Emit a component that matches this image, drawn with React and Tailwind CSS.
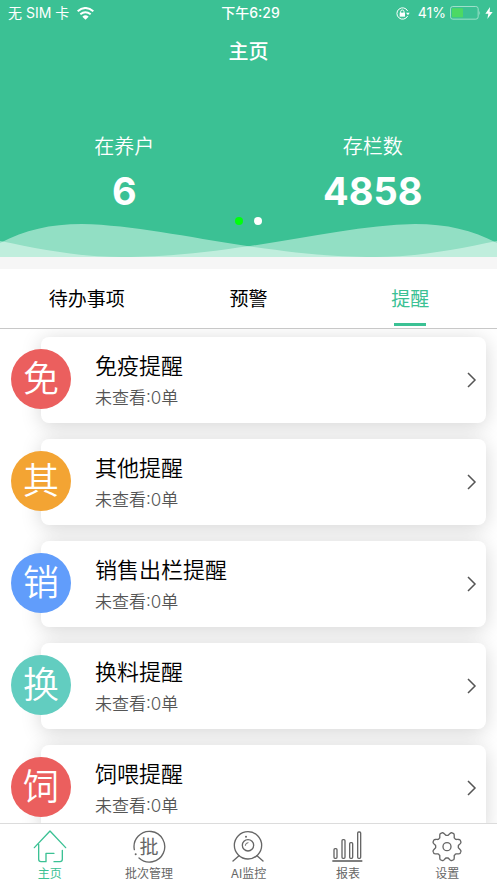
import React, { useState } from 'react';

const reminders = [
  { id: 1, mark: '免', title: '免疫提醒', count: 0, color: 'bg-[#eb5f5e]' },
  { id: 2, mark: '其', title: '其他提醒', count: 0, color: 'bg-[#f3a433]' },
  { id: 3, mark: '销', title: '销售出栏提醒', count: 0, color: 'bg-[#619dfb]' },
  { id: 4, mark: '换', title: '换料提醒', count: 0, color: 'bg-[#62cdc0]' },
  { id: 5, mark: '饲', title: '饲喂提醒', count: 0, color: 'bg-[#eb5f5e]' },
];

const tabs = ['待办事项', '预警', '提醒'];

const iconProps = {
  viewBox: '0 0 108 108',
  className: 'h-9 w-9',
  fill: 'none',
  stroke: 'currentColor',
  strokeWidth: 4,
  strokeLinecap: 'round',
  strokeLinejoin: 'round',
  'aria-hidden': true,
};

// Eight rounded teeth, with a valley pointing straight up
const gearPoints = Array.from({ length: 160 }, (_, i) => {
  const angle = (i / 160) * Math.PI * 2;
  const wave = Math.max(-1, Math.min(1, Math.cos(angle * 8) * 1.4));
  const r = 39 - wave * 5;
  return `${(54 + r * Math.sin(angle)).toFixed(1)},${(53 - r * Math.cos(angle)).toFixed(1)}`;
}).join(' ');

const HomeIcon = () => (
  <svg {...iconProps}>
    <path d="M7 56 54 6l47 50" />
    <path d="M20 46v45q0 7 7 7h15V73h24M91 64v27q0 7-7 7H66" />
  </svg>
);

const BatchIcon = () => (
  <span className="relative flex h-9 w-9 items-center justify-center">
    <svg {...iconProps}>
      <path d="M10 62A46 46 0 1 1 24 87" />
      <circle cx="14" cy="76" r="3" fill="currentColor" stroke="none" />
    </svg>
    <span className="absolute inset-0 flex items-center justify-center text-[19px] leading-none">批</span>
  </span>
);

const CameraIcon = () => (
  <svg {...iconProps}>
    <circle cx="54" cy="49" r="41" />
    <circle cx="54" cy="49" r="17" />
    <path d="M46 49a8 8 0 0 1 8-8" strokeWidth="3" />
    <circle cx="48" cy="23" r="3" fill="currentColor" stroke="none" />
    <path d="M27 80 9 96M81 80l18 16" />
  </svg>
);

const ReportIcon = () => (
  <svg {...iconProps}>
    <rect x="12" y="59" width="9" height="29" rx="3" />
    <rect x="36" y="32" width="9" height="56" rx="3" />
    <rect x="59" y="41" width="9" height="47" rx="3" />
    <rect x="83" y="9" width="9" height="79" rx="3" />
    <path d="M7 96h90" strokeWidth="5" strokeLinecap="butt" />
  </svg>
);

const SettingsIcon = () => (
  <svg {...iconProps}>
    <circle cx="54" cy="53" r="12" />
    <polygon points={gearPoints} />
  </svg>
);

const navItems = [
  { label: '主页', icon: HomeIcon },
  { label: '批次管理', icon: BatchIcon },
  { label: 'AI监控', icon: CameraIcon },
  { label: '报表', icon: ReportIcon },
  { label: '设置', icon: SettingsIcon },
];

const StatusBar = () => (
  <div className="grid h-[26px] grid-cols-3 items-center pr-1 pl-2 text-sm leading-6">
    <div className="flex items-center gap-2">
      <span>无 SIM 卡</span>
      <svg viewBox="0 0 51 39" className="h-[13px] w-[17px]" fill="none" stroke="currentColor" strokeWidth="6" aria-hidden="true">
        <path d="M2 13Q25-7 49 13M10 22q15-13 31 0" />
        <path d="M16 29q9-8 19 0l-9.500 9z" fill="currentColor" stroke="none" />
      </svg>
    </div>
    <span className="text-center font-medium">下午6:29</span>
    <div className="flex items-center justify-end gap-1">
      <svg viewBox="0 0 42 39" className="mr-1 h-[13px] w-3.5" fill="none" stroke="currentColor" strokeWidth="3" aria-hidden="true">
        <path d="M35 27A17 17 0 1 1 35 12" />
        <path d="M30 17h11l-5 8z" fill="currentColor" stroke="none" />
        <rect x="11" y="17" width="16" height="12" fill="currentColor" stroke="none" />
        <path d="M14 18v-4a5 5 0 0 1 10 0v4" />
      </svg>
      <span>41%</span>
      <svg viewBox="0 0 93 42" className="h-3.5 w-[31px]" aria-hidden="true">
        <rect x="1.500" y="1.500" width="83" height="38" rx="7" fill="none" stroke="#9ee0ca" strokeWidth="3" />
        <rect x="6" y="7" width="33" height="27" rx="2" fill="#4cd964" />
        <path d="M88 14q5 7 0 14z" fill="#9ee0ca" />
      </svg>
      <svg viewBox="0 0 22 36" className="h-3 w-2" fill="currentColor" aria-hidden="true">
        <path d="M14 0 0 20h9L6 36l16-21h-9z" />
      </svg>
    </div>
  </div>
);

const Waves = () => (
  <svg
    viewBox="0 0 497 33"
    preserveAspectRatio="none"
    className="absolute inset-x-0 bottom-0 h-[33px] w-full"
    fill="#f2fff9"
    fillOpacity="0.48"
    aria-hidden="true"
  >
    <path d="M0 19C25 6 50 0 82 0c50 1 105 13 165 22 43 6 80 11 128 11 45 0 82-8 122-16v16H0z" />
    <path d="M497 19C472 6 447 0 415 0c-50 1-105 13-165 22-43 6-80 11-128 11C77 33 40 25 0 17v16h497z" />
  </svg>
);

const Stat = ({ label, value }) => (
  <div className="flex flex-col items-center">
    <span className="text-xl leading-7 font-[350]">{label}</span>
    <span className="mt-2 text-[38px] leading-[44px] font-bold">{value}</span>
  </div>
);

const ReminderRow = ({ item }) => (
  <li className="flex items-start">
    <span className={`z-10 mt-3 -mr-[30px] flex h-[60px] w-[60px] shrink-0 items-center justify-center rounded-full text-4xl font-[350] text-white ${item.color}`}>
      {item.mark}
    </span>
    <button
      type="button"
      className="flex h-[86px] min-w-0 flex-1 items-center justify-between rounded-lg bg-white pr-2 pl-[54px] text-left shadow-[0_3px_20px_rgba(0,0,0,0.17)]"
    >
      <span className="flex flex-col gap-1">
        <span className="text-[22px] leading-8 font-[350] text-black">{item.title}</span>
        <span className="text-[17px] leading-6 font-[350] text-[#555]">未查看:{item.count}单</span>
      </span>
      <svg viewBox="0 0 12 18" className="h-[18px] w-3" fill="none" stroke="#555" strokeWidth="1.500" aria-hidden="true">
        <path d="m2 2 7 7-7 7" />
      </svg>
    </button>
  </li>
);

const App = () => {
  const [activeTab, setActiveTab] = useState('提醒');
  const [activeNav, setActiveNav] = useState('主页');

  return (
    <div className="flex h-screen flex-col overflow-hidden bg-white font-['Inter','Noto_Sans_CJK_SC',sans-serif]">
      <header className="relative h-[257px] shrink-0 bg-[#3bc194] text-white">
        <StatusBar />
        <h1 className="pt-3 text-center text-xl leading-7 font-medium">主页</h1>
        <div className="grid grid-cols-2 pt-[67px]">
          <Stat label="在养户" value="6" />
          <Stat label="存栏数" value="4858" />
        </div>
        <Waves />
        {/* Carousel dots */}
        <div className="absolute inset-x-0 bottom-8 flex justify-center gap-[11px]">
          <span className="h-2 w-2 rounded-full bg-[#00ff0c]" />
          <span className="h-2 w-2 rounded-full bg-white" />
        </div>
      </header>

      <div className="h-3 shrink-0 bg-[#f6f6f6]" />

      {/* Tabs */}
      <div role="tablist" className="grid h-[60px] shrink-0 grid-cols-3 border-b border-[#c8c8c8] px-1.5">
        {tabs.map((tab) => (
          <button
            key={tab}
            type="button"
            role="tab"
            aria-selected={tab === activeTab}
            onClick={() => setActiveTab(tab)}
            className={`relative pt-1 text-[19px] ${tab === activeTab ? 'text-[#3bc194]' : 'text-black'}`}
          >
            {tab}
            {tab === activeTab && (
              <span className="absolute bottom-0.5 left-1/2 h-[3px] w-8 -translate-x-1/2 bg-[#3bc194]" />
            )}
          </button>
        ))}
      </div>

      <main className="min-h-0 flex-1 overflow-y-auto [scrollbar-width:none]">
        <ul className="flex flex-col gap-4 px-[11px] pt-2 pb-4">
          {reminders.map((item) => (
            <ReminderRow key={item.id} item={item} />
          ))}
        </ul>
      </main>

      {/* Bottom navigation */}
      <nav className="grid h-[60px] shrink-0 grid-cols-5 border-t border-[#dcdcdc] bg-white">
        {navItems.map((item) => {
          const Icon = item.icon;
          return (
            <button
              key={item.label}
              type="button"
              onClick={() => setActiveNav(item.label)}
              className={`flex flex-col items-center pt-[5px] text-xs ${item.label === activeNav ? 'text-[#3bc194]' : 'text-[#666]'}`}
            >
              <Icon />
              <span className="leading-[18px]">{item.label}</span>
            </button>
          );
        })}
      </nav>
    </div>
  );
};

export default App;
